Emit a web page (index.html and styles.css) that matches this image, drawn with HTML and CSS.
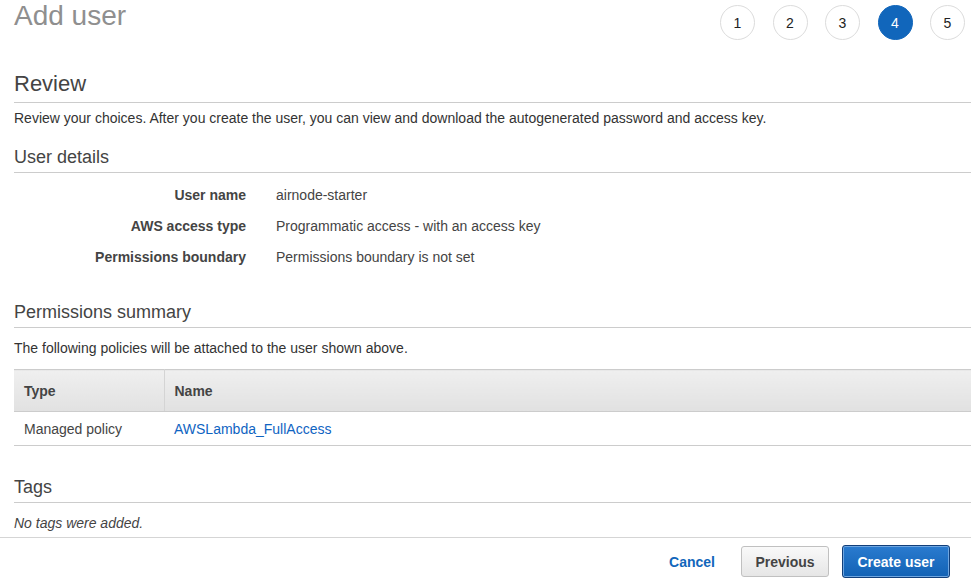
FILE: index.html
```html
<!DOCTYPE html>
<html lang="en">
<head>
<meta charset="utf-8">
<title>Add user</title>
<link rel="stylesheet" href="styles.css">
</head>
<body>
<div class="page">
  <header class="top">
    <h1 class="title">Add user</h1>
    <ol class="steps">
      <li class="step">1</li>
      <li class="step">2</li>
      <li class="step">3</li>
      <li class="step active">4</li>
      <li class="step">5</li>
    </ol>
  </header>

  <section class="review">
    <h2 class="review-title">Review</h2>
    <p class="intro">Review your choices. After you create the user, you can view and download the autogenerated password and access key.</p>

    <h3 class="section-title first">User details</h3>
    <dl class="details">
      <dt>User name</dt><dd>airnode-starter</dd>
      <dt>AWS access type</dt><dd>Programmatic access - with an access key</dd>
      <dt>Permissions boundary</dt><dd>Permissions boundary is not set</dd>
    </dl>

    <h3 class="section-title perms">Permissions summary</h3>
    <p class="perm-intro">The following policies will be attached to the user shown above.</p>
    <table class="policies">
      <thead>
        <tr><th class="col-type">Type</th><th>Name</th></tr>
      </thead>
      <tbody>
        <tr><td>Managed policy</td><td><a class="link" href="#">AWSLambda_FullAccess</a></td></tr>
      </tbody>
    </table>

    <h3 class="section-title tags">Tags</h3>
    <p class="no-tags">No tags were added.</p>
  </section>
</div>
<footer class="actions">
  <a class="cancel" href="#">Cancel</a>
  <button class="btn btn-secondary">Previous</button>
  <button class="btn btn-primary">Create user</button>
</footer>
</body>
</html>
```
FILE: styles.css
```css
* { box-sizing: border-box; }
html, body { margin: 0; padding: 0; background: #fff; }
body {
  font-family: "Liberation Sans", Arial, Helvetica, sans-serif;
  font-size: 14px;
  line-height: 20px;
  color: #444;
  width: 971px;
  overflow: hidden;
}
.page { padding-left: 14px; }

.top {
  display: flex;
  justify-content: space-between;
  align-items: flex-start;
  height: 44px;
  padding-right: 6px;
}
.title {
  margin: 0;
  font-size: 28px;
  line-height: 32px;
  font-weight: normal;
  color: #8f8f8f;
}
.steps {
  list-style: none;
  margin: 5px 0 0;
  padding: 0;
  display: flex;
  gap: 17.5px;
}
.step {
  width: 35px;
  height: 35px;
  border: 1px solid #dcdcdc;
  border-radius: 50%;
  display: flex;
  align-items: center;
  justify-content: center;
  font-size: 14px;
  color: #222;
  background: #fff;
}
.step.active {
  background: #1166bb;
  border-color: #1166bb;
  color: #fff;
}

.review-title {
  margin: 27px 0 0;
  font-size: 22px;
  line-height: 26px;
  font-weight: normal;
  color: #444;
  padding-bottom: 5px;
  border-bottom: 1px solid #ccc;
}
.intro { margin: 5px 0 0; color: #333; }

.section-title {
  margin: 0;
  font-size: 18px;
  line-height: 22px;
  font-weight: normal;
  color: #444;
  padding-bottom: 4px;
  border-bottom: 1px solid #ccc;
}
.section-title.first { margin-top: 18px; }
.section-title.perms { margin-top: 28px; }
.section-title.tags { margin-top: 30px; }

.details {
  margin: 7px 0 0;
  display: grid;
  grid-template-columns: 232px 1fr;
  column-gap: 30px;
}
.details dt, .details dd {
  margin: 0;
  padding: 5px 0 6px;
}
.details dt {
  font-weight: bold;
  text-align: right;
  color: #444;
}
.details dd { color: #444; }

.perm-intro { margin: 10px 0 0; color: #333; }

.policies {
  margin-top: 11px;
  width: 100%;
  border-collapse: collapse;
}
.policies th {
  text-align: left;
  font-weight: bold;
  color: #444;
  padding: 11px 10px 10px;
  background: linear-gradient(#efefef, #e1e1e1);
  border-top: 1px solid #ccc;
  border-bottom: 1px solid #ccc;
}
.policies th.col-type {
  width: 150px;
  border-right: 1px solid #d4d4d4;
}
.policies td {
  padding: 7px 10px 6px;
  border-bottom: 1px solid #ccc;
  color: #444;
}
.link { color: #0f64c2; text-decoration: none; }

.no-tags {
  margin: 10px 0 0;
  font-style: italic;
  color: #444;
  padding-bottom: 4px;
}

.actions {
  border-top: 1px solid #d5d5d5;
  display: flex;
  justify-content: flex-end;
  align-items: center;
  padding: 7px 21px 0 0;
}
.cancel {
  color: #1166bb;
  font-weight: bold;
  text-decoration: none;
  margin-right: 26px;
}
.btn {
  font-family: inherit;
  font-size: 14px;
  font-weight: bold;
  height: 31px;
  border-radius: 3px;
  padding: 0 6px;
  white-space: nowrap;
  cursor: pointer;
}
.btn-secondary {
  width: 88px;
  color: #444;
  background: linear-gradient(#f9f9f9, #e6e6e6);
  border: 1px solid #c0c0c0;
  margin-right: 13px;
}
.btn-primary {
  width: 108px;
  height: 33px;
  color: #fff;
  background: linear-gradient(#2a7bcf, #1262b5);
  border: 1px solid #123f7a;
  box-shadow: inset 0 0 0 1px #6fa6e0;
}
```
